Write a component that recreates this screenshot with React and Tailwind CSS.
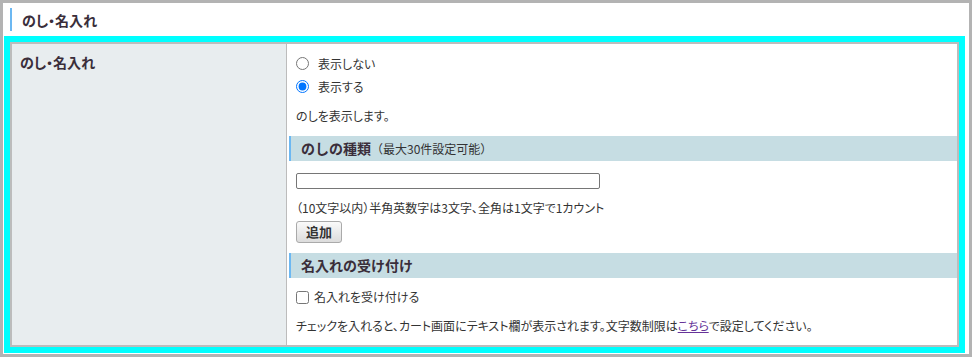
import React from 'react';

const jp = "[font-family:'Noto_Sans_CJK_JP','Noto_Sans',sans-serif]";

function SectionBar({ title, note }) {
  return (
    <div className="flex h-[25px] items-center border-l-2 border-[#6cb8f2] bg-[#c6dde3] pl-[10px] [font-feature-settings:normal]">
      <span className="text-[14px] font-bold text-[#3a2e3a]">{title}</span>
      {note && <span className="text-[12px] text-[#333]">{note}</span>}
    </div>
  );
}

export default function App() {
  return (
    <div className={`h-[357px] w-[972px] border-[3px] border-[#b3b3b3] bg-white text-[#333] ${jp} [font-feature-settings:'palt']`}>
      {/* page header */}
      <div className="flex h-[33px] items-center pl-[7px]">
        <div className="flex h-[23px] items-center border-l-2 border-[#6cb8f2] pl-[10px]">
          <span className="text-[14px] font-bold leading-none text-[#3a2e3a]">のし・名入れ</span>
        </div>
      </div>

      {/* highlighted settings table */}
      <div className="ml-[1px] h-[317px] w-[961px] border-[6px] border-[#00ffff]">
        <div className="flex h-full border-2 border-[#bcbcbc]">
          <div className="w-[275px] shrink-0 border-r border-[#bcbcbc] bg-[#e8edef] pl-[8px] pt-[5px]">
            <span className="text-[14px] font-bold leading-[20px] text-[#3a2e3a]">のし・名入れ</span>
          </div>

          <div className="flex-1 pl-[2px] pt-[8px] text-[12px]">
            <div className="ml-[7px]">
              <label className="flex h-[23px] items-center gap-[9px]">
                <input type="radio" name="noshi" className="m-0 h-[13px] w-[13px]" />
                <span>表示しない</span>
              </label>
              <label className="flex h-[23px] items-center gap-[9px]">
                <input type="radio" name="noshi" defaultChecked className="m-0 h-[13px] w-[13px]" />
                <span>表示する</span>
              </label>
              <p className="mt-[9px] leading-[18px]">のしを表示します。</p>
            </div>

            <div className="mt-[11px]">
              <SectionBar title="のしの種類" note="（最大30件設定可能）" />
            </div>

            <div className="ml-[7px]">
              <input type="text" className="mt-[12px] block h-[16px] w-[304px] rounded-[2px] border border-[#767676] bg-white" />
              <p className="mt-[10px] leading-[18px]">（10文字以内）半角英数字は3文字、全角は1文字で1カウント</p>
              <button className="mt-[4px] h-[22px] w-[46px] rounded-[3px] border border-[#aaaaaa] bg-gradient-to-b from-[#fafafa] to-[#dcdcdc] text-[13px] font-bold text-[#333]">
                追加
              </button>
            </div>

            <div className="mt-[10px]">
              <SectionBar title="名入れの受け付け" />
            </div>

            <div className="ml-[7px]">
              <label className="mt-[10px] flex h-[18px] items-center gap-[5px]">
                <input type="checkbox" className="m-0 h-[13px] w-[13px]" />
                <span>名入れを受け付ける</span>
              </label>
              <p className="mt-[11px] leading-[18px]">
                チェックを入れると、カート画面にテキスト欄が表示されます。文字数制限は
                <a href="#" className="text-[#663399] underline">こちら</a>
                で設定してください。
              </p>
            </div>
          </div>
        </div>
      </div>
    </div>
  );
}
